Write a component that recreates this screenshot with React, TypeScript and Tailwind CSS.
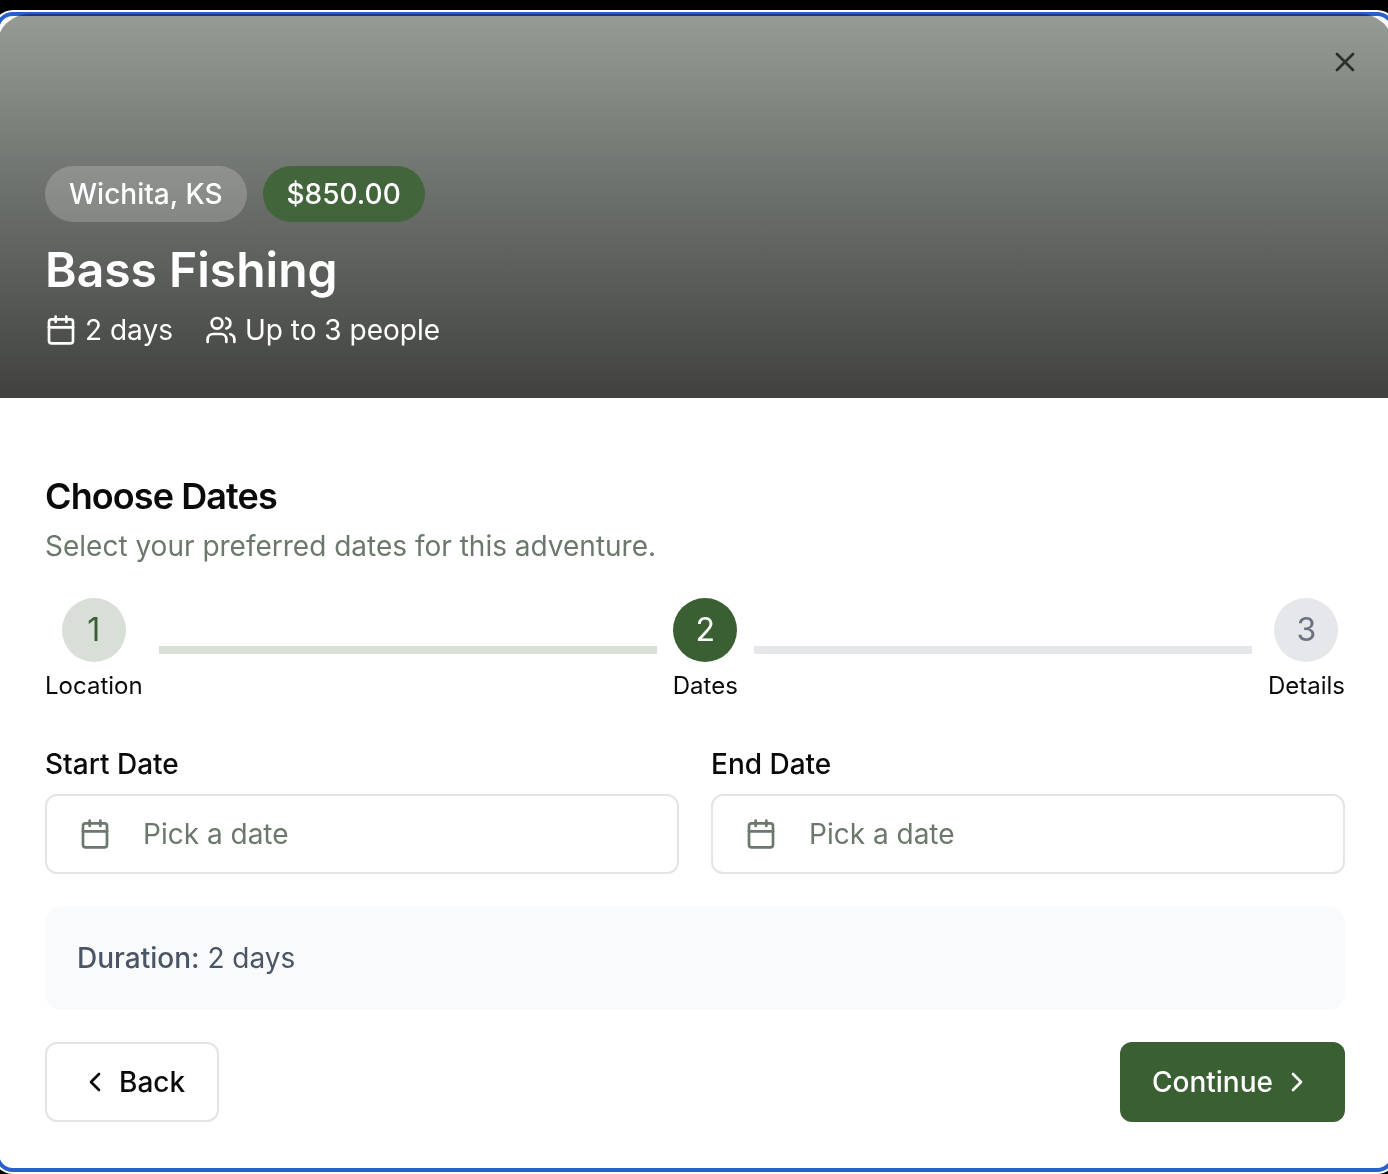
import React from "react";
import { Calendar, ChevronLeft, ChevronRight, Users, X } from "lucide-react";

function Step({ number, label, tone }: { number: number; label: string; tone: string }) {
  return (
    <li className="flex flex-col items-center">
      <span className={`flex size-16 items-center justify-center rounded-full text-[32px] leading-10 ${tone}`}>
        {number}
      </span>
      <span className="mt-2 text-2xl leading-8">{label}</span>
    </li>
  );
}

function DateField({ id, label }: { id: string; label: string }) {
  return (
    <div className="flex flex-col gap-4">
      <label htmlFor={id} className="text-[28px] leading-7 font-medium">
        {label}
      </label>
      <button
        id={id}
        type="button"
        className="flex h-20 w-full items-center gap-8 rounded-xl border-2 border-[#e4e4e4] bg-white px-8 text-left text-[28px] leading-10 text-[#6b786b]"
      >
        <Calendar className="size-8 shrink-0" />
        Pick a date
      </button>
    </div>
  );
}

export default function App() {
  return (
    <main className="overflow-hidden bg-black pt-2.5 font-['Inter',sans-serif] text-[#0a0a0a] [font-optical-sizing:none]">
      <div className="-mr-[9px] -ml-[7px] rounded-[20px] bg-white p-1">
        <section role="dialog" aria-labelledby="trip-title" className="relative">
          <header className="relative flex h-96 flex-col justify-end rounded-t-4xl bg-linear-to-b/srgb from-[#969c95] via-[#696d69] to-[#41423f] p-12 text-white">
            <button type="button" aria-label="Close" className="absolute top-8 right-8 text-[#2b302b]">
              <X className="size-8" />
            </button>
            <div className="flex gap-4 text-[28px] leading-10 font-medium">
              <span className="rounded-full bg-white/20 px-6 py-2">Wichita, KS</span>
              <span className="rounded-full bg-[#3e6436]/90 px-6 py-2">$850.00</span>
            </div>
            <h1 id="trip-title" className="mt-4 text-5xl leading-16 font-semibold">
              Bass Fishing
            </h1>
            <div className="mt-2 flex gap-8 text-[28px] leading-10">
              <span className="flex items-center gap-2">
                <Calendar className="size-8" />2 days
              </span>
              <span className="flex items-center gap-2">
                <Users className="size-8" />
                Up to 3 people
              </span>
            </div>
          </header>

          <div className="px-12 pt-20 pb-12">
            <h2 className="text-4xl leading-9 font-semibold tracking-tight">Choose Dates</h2>
            <p className="mt-3 text-[28px] leading-10 text-[#6b786b]">
              Select your preferred dates for this adventure.
            </p>

            <ol className="mt-8 flex items-center gap-4">
              <Step number={1} label="Location" tone="bg-[#d8dfd6] text-[#3a5f32]" />
              <li aria-hidden="true" className="h-2 flex-1 bg-[#d8dfd6]" />
              <Step number={2} label="Dates" tone="bg-[#3a5f32] text-white" />
              <li aria-hidden="true" className="h-2 flex-1 bg-[#e5e7eb]" />
              <Step number={3} label="Details" tone="bg-[#e5e7eb] text-[#6a7282]" />
            </ol>

            <div className="mt-12 grid grid-cols-2 gap-8">
              <DateField id="start-date" label="Start Date" />
              <DateField id="end-date" label="End Date" />
            </div>

            <p className="mt-8 rounded-2xl bg-[#f9fafb] p-8 text-[28px] leading-10 text-[#4a5565]">
              <span className="font-medium">Duration:</span> 2 days
            </p>

            <div className="mt-8 flex justify-between text-[28px] leading-10 font-medium">
              <button type="button" className="flex h-20 items-center gap-2 rounded-xl border-2 border-[#e4e4e4] bg-white px-8">
                <ChevronLeft className="size-8" />
                Back
              </button>
              <button type="button" className="flex h-20 items-center gap-2 rounded-xl bg-[#3a5f32] px-8 text-white">
                Continue
                <ChevronRight className="size-8" />
              </button>
            </div>
          </div>

          {/* Focus ring drawn over the card edge */}
          <div
            aria-hidden="true"
            className="pointer-events-none absolute -inset-0.5 rounded-[18px] border-4 border-[#2860cc] mix-blend-multiply"
          />
        </section>
      </div>
    </main>
  );
}
